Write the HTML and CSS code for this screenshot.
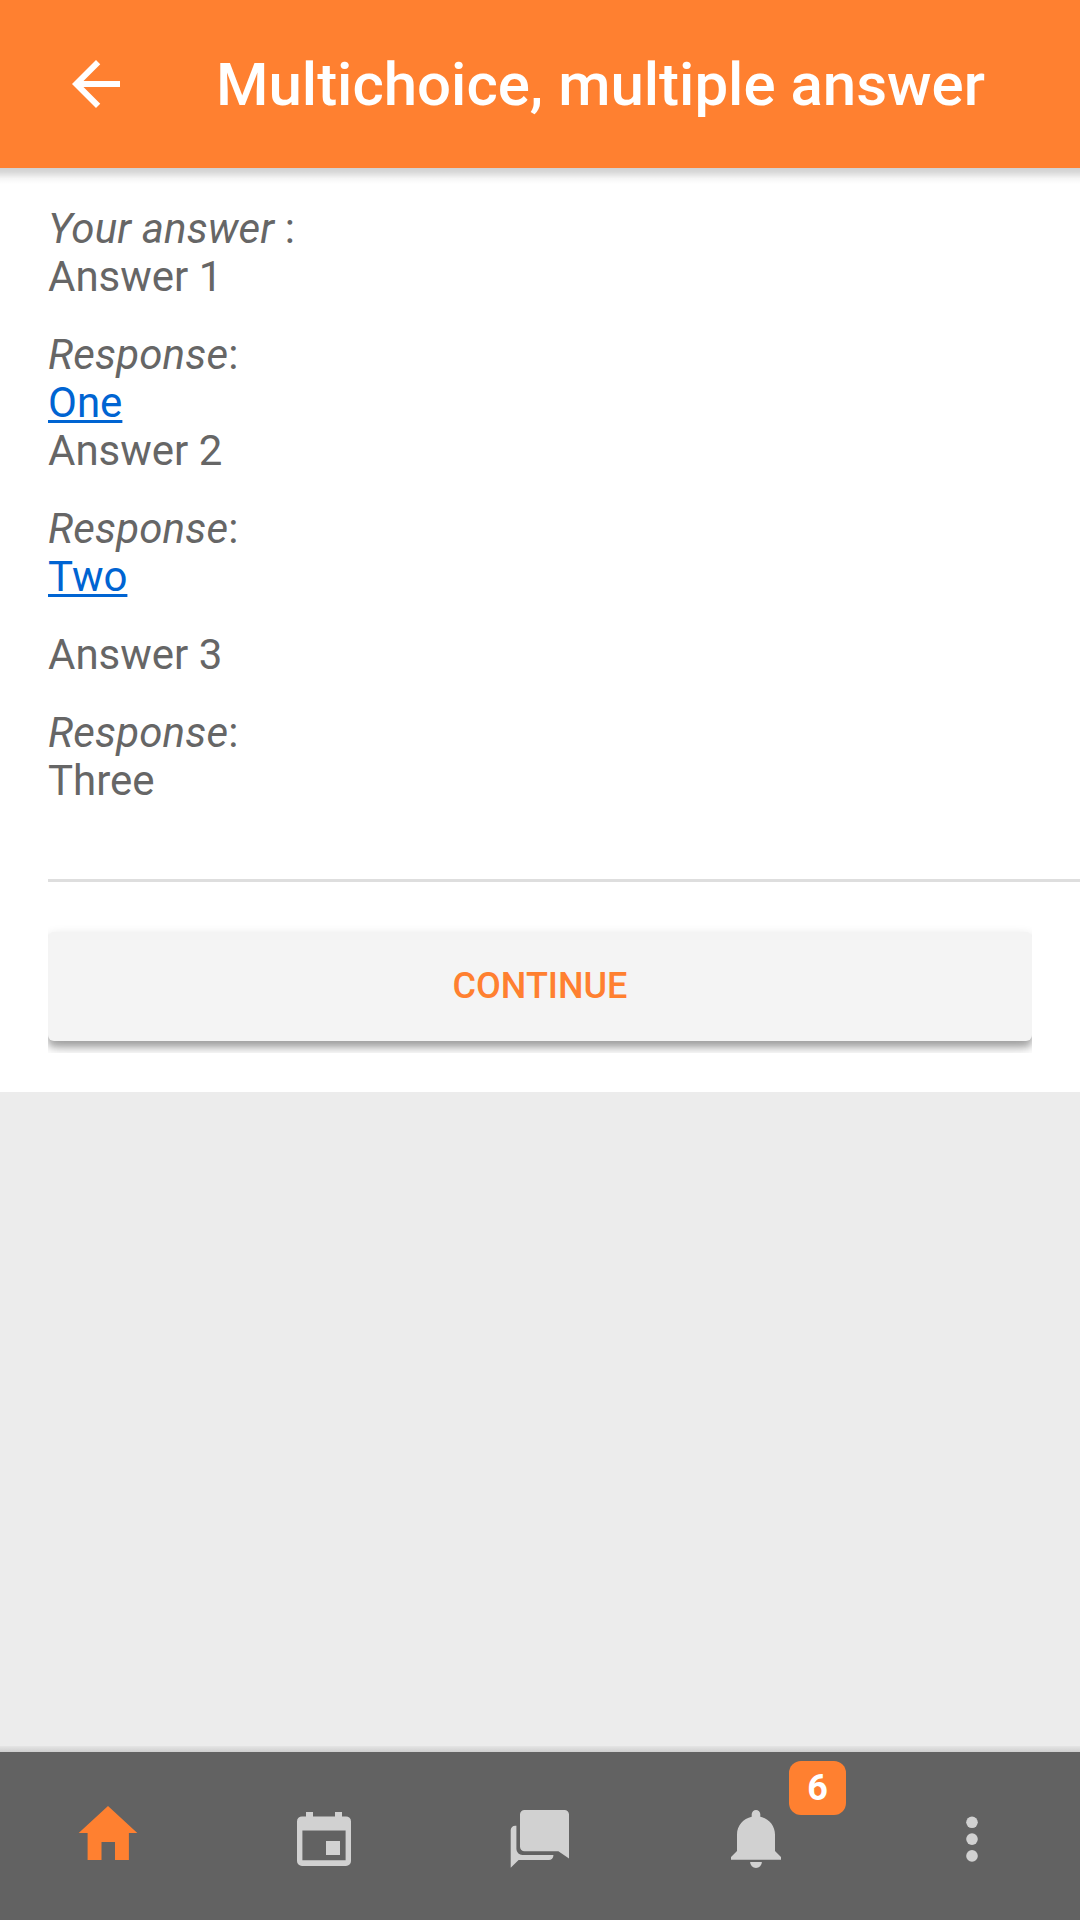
FILE: index.html
```html
<!DOCTYPE html>
<html lang="en">
<head>
<meta charset="utf-8">
<title>Multichoice, multiple answer</title>
<link rel="stylesheet" href="styles.css">
</head>
<body>
<div class="app">
  <header class="toolbar">
    <a class="back" aria-label="Back"><svg class="icon" viewBox="0 0 24 24"><path d="M20 11H7.83l5.59-5.59L12 4l-8 8 8 8 1.41-1.41L7.83 13H20z"/></svg></a>
    <h1 class="title">Multichoice, multiple answer</h1>
  </header>
  <main class="content">
    <section class="answers">
      <p><em>Your answer</em> :<br>Answer 1</p>
      <p><em>Response</em>:<br><a class="link">One</a><br>Answer 2</p>
      <p><em>Response</em>:<br><a class="link">Two</a></p>
      <p>Answer 3</p>
      <p><em>Response</em>:<br>Three</p>
    </section>
    <section class="actions">
      <div class="button-wrap"><button class="button">CONTINUE</button></div>
    </section>
  </main>
  <nav class="tabs">
    <a class="tab active"><svg class="icon" viewBox="0 0 72 72"><path d="M29.5 60V42H43v18h13.9V33h8.4L36 6 6.7 33h8.9v27z"/></svg></a>
    <a class="tab"><svg class="icon" viewBox="0 0 72 72"><path fill-rule="evenodd" d="M18 12h7v4.4h22V12h7v4.4h4a5 5 0 0 1 5 5V61a5 5 0 0 1-5 5H14a5 5 0 0 1-5-5V21.400a5 5 0 0 1 5-5h4zM14.400 30.600v29.700h43.200V30.600zM38 41h14v14H38z"/></svg></a>
    <a class="tab"><svg class="icon" viewBox="0 0 72 72"><path d="M20.500 10h40a4.500 4.500 0 0 1 4.500 4.500v44l-10.600-7.200H20.500a4.500 4.500 0 0 1-4.500-4.500V14.500a4.500 4.500 0 0 1 4.500-4.500z"/><path d="M6.700 67.800V30.200a4.500 4.500 0 0 1 4.500-4.500h1.200v23.200a6 6 0 0 0 6 6h31v.6a4.500 4.500 0 0 1-4.500 4.500H14.600z"/></svg></a>
    <a class="tab">
      <svg class="icon" viewBox="0 0 72 72"><path d="M36 10a4.300 4.300 0 0 0-4.300 4.300v2.400C23.300 18.600 17 25.300 17 34.600V51l-6 6v2.700h50V57l-6-6V34.600c0-9.300-6.300-16-14.700-17.900v-2.400A4.300 4.300 0 0 0 36 10zM30.100 62h11.800a5.900 5.900 0 0 1-11.800 0z"/></svg>
      <span class="badge">6</span>
    </a>
    <a class="tab"><svg class="icon" viewBox="0 0 72 72"><circle cx="36" cy="22.300" r="5.800"/><circle cx="36" cy="39.100" r="5.800"/><circle cx="36" cy="55.900" r="5.800"/></svg></a>
  </nav>
</div>
</body>
</html>
```
FILE: styles.css
```css
* { box-sizing: border-box; }

body {
  margin: 0;
  font-family: Roboto, "Liberation Sans", sans-serif;
  font-size: 42px;
  line-height: 48px;
  color: #666;
  background: #ececec;
}

.app {
  display: flex;
  flex-direction: column;
  height: 1920px;
}

.icon {
  display: block;
  width: 72px;
  height: 72px;
  fill: currentColor;
}

/* Toolbar */
.toolbar {
  position: relative;
  flex: none;
  display: flex;
  align-items: center;
  gap: 84px;
  height: 168px;
  padding-left: 60px;
  color: #fff;
  background: #ff8030;
}

.toolbar::after {
  content: "";
  position: absolute;
  left: 0;
  right: 0;
  top: 100%;
  height: 16px;
  background: linear-gradient(rgba(0, 0, 0, .18), rgba(0, 0, 0, .15) 25%, rgba(0, 0, 0, .04) 65%, transparent);
}

.title {
  margin: 0;
  padding-top: 2px;
  font-size: 60px;
  font-weight: 500;
  line-height: 72px;
  white-space: nowrap;
}

/* Content */
.content { flex: 1; }

.answers {
  height: 711px;
  padding: 37px 0 0 48px;
  background: #fff;
}

.answers p { margin: 0 0 30px; }

.answers em { letter-spacing: .15px; }

.link {
  color: #0064d2;
  text-decoration: underline;
  text-decoration-thickness: 3px;
  text-underline-offset: 3px;
}

.actions {
  height: 213px;
  padding: 42px 48px 0;
  background: linear-gradient(#dedede, #dedede) 48px 0 / 100% 3px no-repeat #fff;
}

.button-wrap {
  overflow: hidden;
  padding: 11px 0 12px;
}

.button {
  display: block;
  width: 100%;
  height: 109px;
  padding: 0;
  border: 0;
  border-radius: 6px;
  font: 500 36px/109px Roboto, "Liberation Sans", sans-serif;
  color: #ff8030;
  background: #f4f4f4;
  box-shadow: 0 6px 6px rgba(0, 0, 0, .2), 0 6px 13px rgba(0, 0, 0, .24);
}

/* Tab bar */
.tabs {
  position: relative;
  flex: none;
  display: grid;
  grid-template-columns: repeat(5, 1fr);
  height: 168px;
  color: #d1d1d1;
  background: #626262;
}

.tabs::before {
  content: "";
  position: absolute;
  left: 0;
  right: 0;
  bottom: 100%;
  height: 6px;
  background: linear-gradient(#e5e5e5, #cecece);
}

.tab {
  position: relative;
  display: flex;
  align-items: center;
  justify-content: center;
}

.tab.active { color: #ff8030; }

.badge {
  position: absolute;
  top: 9px;
  left: 141px;
  width: 57px;
  height: 54px;
  border-radius: 12px;
  font-size: 36px;
  font-weight: 700;
  line-height: 54px;
  text-align: center;
  color: #fff;
  background: #ff8030;
}
```
